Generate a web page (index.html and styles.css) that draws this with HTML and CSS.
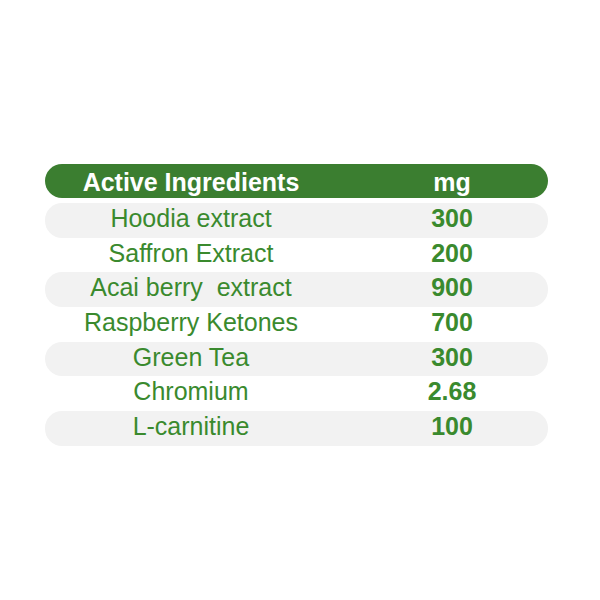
FILE: index.html
```html
<!DOCTYPE html>
<html>
<head>
<meta charset="utf-8">
<link rel="stylesheet" href="styles.css">
</head>
<body>
<div class="table">
  <div class="head">
    <div class="c1">Active Ingredients</div>
    <div class="c2">mg</div>
  </div>
  <div class="row odd"><div class="c1">Hoodia extract</div><div class="c2">300</div></div>
  <div class="row"><div class="c1">Saffron Extract</div><div class="c2">200</div></div>
  <div class="row odd"><div class="c1">Acai berry  extract</div><div class="c2">900</div></div>
  <div class="row"><div class="c1">Raspberry Ketones</div><div class="c2">700</div></div>
  <div class="row odd"><div class="c1">Green Tea</div><div class="c2">300</div></div>
  <div class="row"><div class="c1">Chromium</div><div class="c2">2.68</div></div>
  <div class="row odd"><div class="c1">L-carnitine</div><div class="c2">100</div></div>
</div>
</body>
</html>
```
FILE: styles.css
```css
html, body {
  margin: 0;
  padding: 0;
  background: #ffffff;
}
body {
  font-family: "Liberation Sans", Arial, sans-serif;
  width: 600px;
  height: 600px;
}
.table {
  padding-top: 164px;
  margin-left: 45px;
  width: 503px;
}
.head, .row {
  display: grid;
  grid-template-columns: 292px 1fr;
  font-size: 25px;
  line-height: 29px;
  white-space: pre;
}
.head {
  height: 34px;
  box-sizing: border-box;
  padding-top: 4px;
  background: #3b7e30;
  color: #ffffff;
  font-weight: bold;
  border-radius: 17px;
  margin-bottom: 5px;
}
.row {
  height: 34.67px;
  color: #3a8a2e;
}
.row .c1, .row .c2 {
  margin-top: 1px;
}
.odd {
  background: #f2f2f2;
  border-radius: 17px;
}
.c1 {
  text-align: center;
}
.c2 {
  text-align: center;
  padding-left: 19px;
}
.row .c2 {
  font-weight: bold;
}
```
